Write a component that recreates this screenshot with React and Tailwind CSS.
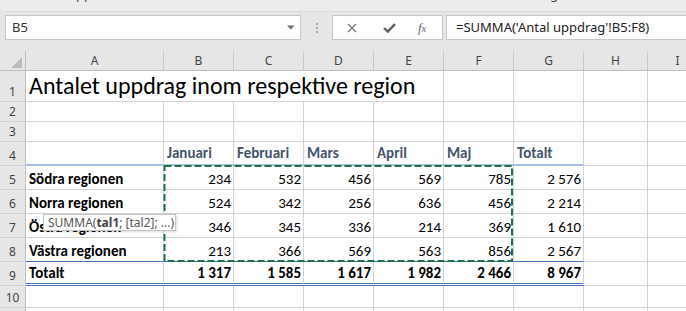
import React from "react";

const cellFont = { fontFamily: "Carlito, Lato, 'Liberation Sans', sans-serif" };
const uiFont = "font-['Noto_Sans',sans-serif]";

const widths = [
  "w-[138px]",
  "w-[70px]",
  "w-[70px]",
  "w-[70px]",
  "w-[70px]",
  "w-[70px]",
  "w-[70px]",
  "w-[64px]",
  "w-[60px]",
];
const letters = ["A", "B", "C", "D", "E", "F", "G", "H", "I"];

const months = ["Januari", "Februari", "Mars", "April", "Maj", "Totalt"];
const regions = [
  ["Södra regionen", "234", "532", "456", "569", "785", "2 576"],
  ["Norra regionen", "524", "342", "256", "636", "456", "2 214"],
  ["Östra regionen", "346", "345", "336", "214", "369", "1 610"],
  ["Västra regionen", "213", "366", "569", "563", "856", "2 567"],
];
const totals = ["Totalt", "1 317", "1 585", "1 617", "1 982", "2 466", "8 967"];

const RowHead = ({ n }) => (
  <div
    className={`w-[26px] shrink-0 bg-[#e6e6e6] border-r border-r-[#bdbdbd] border-b border-b-[#d2d2d2] flex items-end justify-center pb-[1px] text-[12px] leading-[16px] text-[#444] ${uiFont}`}
  >
    {n}
  </div>
);

const Cell = ({ i, children, right, className = "" }) => (
  <div
    className={`${widths[i]} shrink-0 bg-white border-r border-b border-[#d4d4d4] flex items-end px-[3px] pb-[2px] whitespace-nowrap ${
      right ? "justify-end pr-[2px]" : ""
    } ${className}`}
  >
    {children}
  </div>
);

const Row = ({ n, h, children }) => (
  <div className={`flex ${h}`}>
    <RowHead n={n} />
    {children}
  </div>
);

const emptyFrom = (start) =>
  Array.from({ length: 9 - start }, (_, k) => <Cell key={start + k} i={start + k} />);

export default function App() {
  return (
    <div className="relative w-[686px] h-[311px] overflow-hidden bg-[#e6e6e6]">
      {/* clipped ribbon remnant */}
      <div className="h-[12px] overflow-hidden bg-[#ececec] border-b border-[#dcdcdc]">
        <div className={`-mt-[14px] flex text-[13px] leading-[16px] text-[#444] ${uiFont}`}>
          <span className="ml-[76px]">pp</span>
          <span className="ml-[458px]">g</span>
        </div>
      </div>

      {/* formula bar */}
      <div className={`flex items-start h-[39px] pt-[3px] ${uiFont}`}>
        <div className="ml-[5px] w-[296px] h-[25px] bg-white border border-[#c6c6c6] flex items-center pl-[6px] pr-[5px] text-[13px] text-[#333]">
          <span className="flex-1">B5</span>
          <svg width="8" height="5" viewBox="0 0 8 5">
            <path d="M0 0.5h7.5L3.75 4.5z" fill="#6e6e6e" />
          </svg>
        </div>
        <div className="w-[31px] h-[25px] flex flex-col items-center justify-center gap-[2px]">
          <span className="w-[2px] h-[2px] bg-[#a8a8a8]" />
          <span className="w-[2px] h-[2px] bg-[#a8a8a8]" />
          <span className="w-[2px] h-[2px] bg-[#a8a8a8]" />
        </div>
        <div className="w-[111px] h-[25px] bg-white border border-[#c6c6c6] flex items-center">
          <svg className="ml-[14px]" width="10" height="10" viewBox="0 0 10 10">
            <path d="M1 1l8 8M9 1l-8 8" stroke="#7a7a7a" strokeWidth="1.3" />
          </svg>
          <svg className="ml-[26px]" width="13" height="10" viewBox="0 0 13 10">
            <path d="M1 5l3.8 3.6L12 1.2" stroke="#5f5f5f" strokeWidth="2.4" fill="none" />
          </svg>
          <span className="ml-[22px] text-[13px] italic text-[#666] font-['Liberation_Serif',serif]">
            f<span className="text-[10px]">x</span>
          </span>
        </div>
        <div className="ml-[3px] flex-1 h-[25px] bg-white border border-r-0 border-[#c6c6c6] flex items-center pl-[9px] text-[13px] text-[#222] whitespace-nowrap">
          =SUMMA('Antal uppdrag'!B5:F8)
        </div>
      </div>

      {/* column headers */}
      <div className={`flex h-[20px] ${uiFont}`}>
        <div className="w-[26px] shrink-0 border-r border-b border-[#bdbdbd] flex items-end justify-end pr-[3px] pb-[2px]">
          <svg width="11" height="11" viewBox="0 0 11 11">
            <path d="M11 0V11H0z" fill="#bcbcbc" />
          </svg>
        </div>
        {letters.map((l, i) => (
          <div
            key={l}
            className={`${widths[i]} shrink-0 border-r border-r-[#c8c8c8] border-b border-b-[#bdbdbd] flex items-center justify-center text-[12px] text-[#444]`}
          >
            {l}
          </div>
        ))}
      </div>

      {/* sheet */}
      <div style={cellFont} className="text-[15px] leading-[15px] text-black">
        <Row n={1} h="h-[31px]">
          <div className="w-[418px] shrink-0 bg-white border-r border-b border-[#d4d4d4] flex items-end px-[3px] pb-[3px] whitespace-nowrap text-[24px] leading-[24px]">
            Antalet uppdrag inom respektive region
          </div>
          {emptyFrom(5)}
        </Row>
        <Row n={2} h="h-[20px]">{emptyFrom(0)}</Row>
        <Row n={3} h="h-[20px]">{emptyFrom(0)}</Row>
        <Row n={4} h="h-[24px]">
          <Cell i={0} className="border-b-2 border-b-[#a7bde6]" />
          {months.map((m, k) => (
            <Cell
              key={m}
              i={k + 1}
              className="border-b-2 border-b-[#a7bde6] font-bold text-[#44546a] pb-[3px]"
            >
              {m}
            </Cell>
          ))}
          {emptyFrom(7)}
        </Row>
        {regions.map((r, ri) => (
          <Row key={r[0]} n={5 + ri} h="h-[24px]">
            {r.map((v, k) => (
              <Cell
                key={k}
                i={k}
                right={k > 0}
                className={`${k === 0 ? "font-bold" : ""} ${
                  ri === 3 ? "border-b-[#4472c4]" : ""
                }`}
              >
                {v}
              </Cell>
            ))}
            {emptyFrom(7)}
          </Row>
        ))}
        <Row n={9} h="h-[24px]">
          {totals.map((v, k) => (
            <Cell
              key={k}
              i={k}
              right={k > 0}
              className="font-bold border-b-[3px] border-b-[#4472c4] border-double pb-[1px]"
            >
              {v}
            </Cell>
          ))}
          {emptyFrom(7)}
        </Row>
        <Row n={10} h="h-[22px]">{emptyFrom(0)}</Row>
        <Row n="" h="h-[24px]">{emptyFrom(0)}</Row>
      </div>

      {/* copy marquee around B5:F8 */}
      <svg
        className="absolute left-[163px] top-[164px]"
        width="352"
        height="99"
        viewBox="0 0 352 99"
      >
        <rect
          x="1.5"
          y="2"
          width="347.5"
          height="95"
          fill="none"
          stroke="#1f7144"
          strokeWidth="2"
          strokeDasharray="7 3"
        />
      </svg>

      {/* function tooltip */}
      <div
        className={`absolute left-[43px] top-[214px] w-[133px] h-[17px] bg-white border border-[#c4c4c4] shadow-[1px_1px_2px_rgba(0,0,0,0.15)] flex items-center pl-[4px] text-[12px] text-[#555] whitespace-nowrap ${uiFont}`}
      >
        SUMMA(<b className="font-bold text-[#444]">tal1</b>; [tal2]; ...)
      </div>
    </div>
  );
}
